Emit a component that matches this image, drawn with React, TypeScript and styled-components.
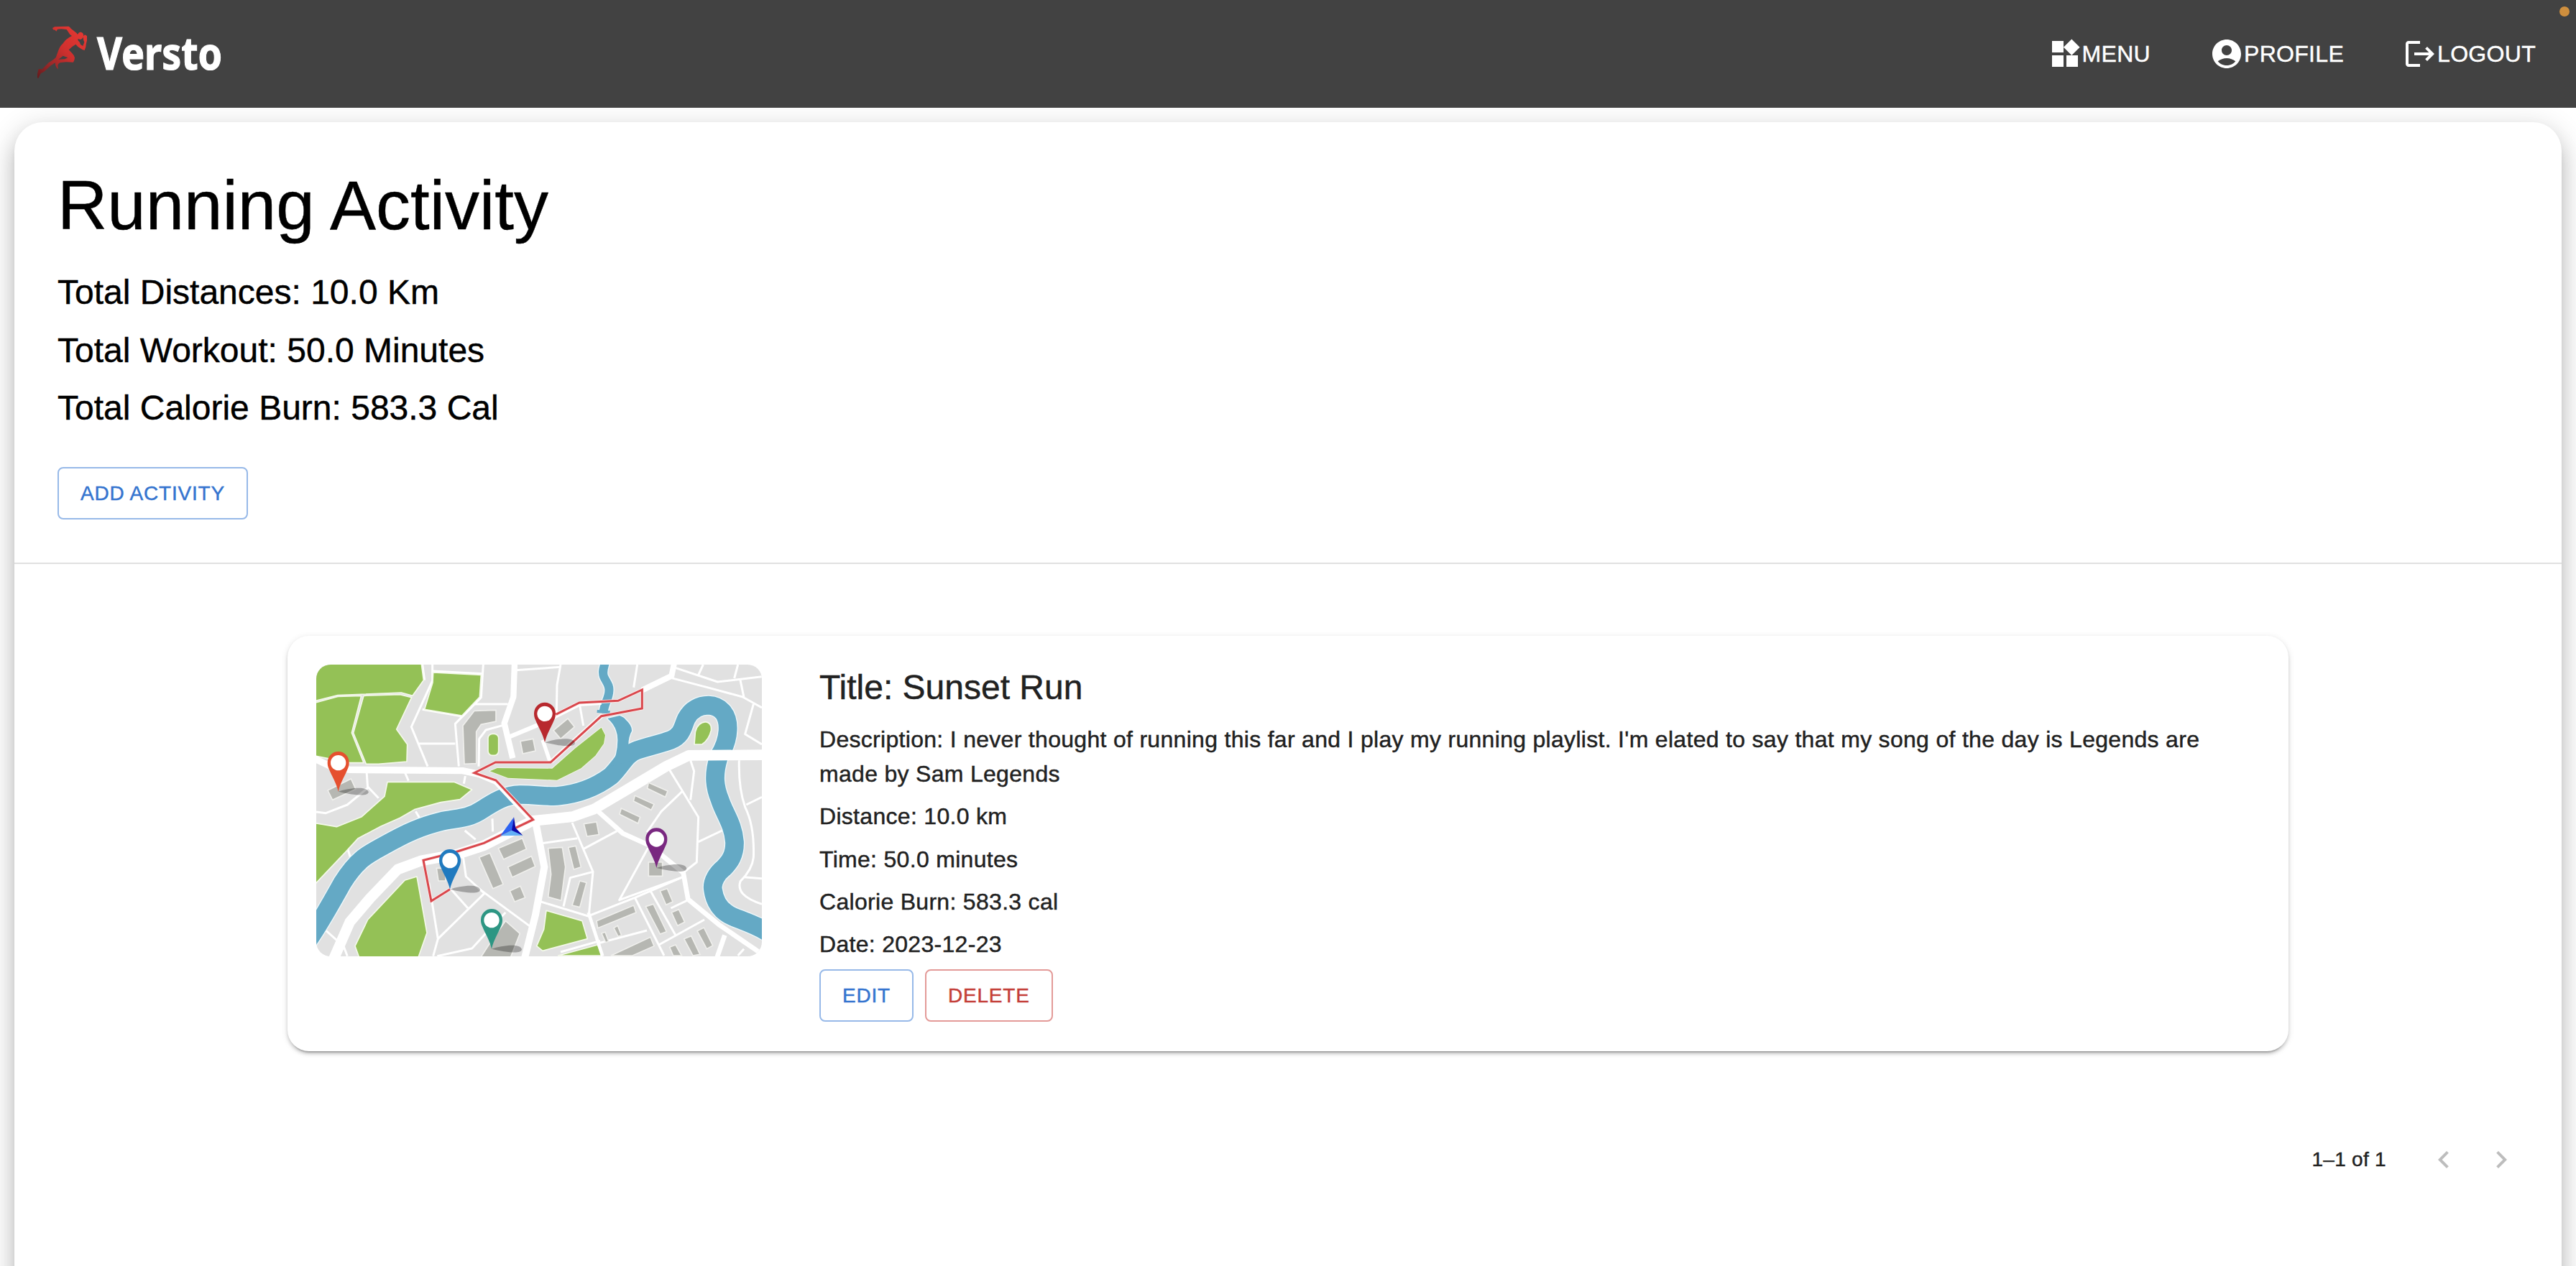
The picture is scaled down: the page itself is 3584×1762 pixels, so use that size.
import React from "react";
import styled, { createGlobalStyle } from "styled-components";

const GlobalStyle = createGlobalStyle`
  * { box-sizing: border-box; }
  body {
    margin: 0;
    background: #fff;
    font-family: "Liberation Sans", Arial, Helvetica, sans-serif;
    -webkit-text-stroke: 0.45px currentColor;
    overflow: hidden;
  }
  h1, h2, p { margin: 0; font-weight: 400; }
`;

const Page = styled.div`
  display: flex;
  flex-direction: column;
  height: 1762px;
  width: 100%;
  overflow: hidden;
  background: #fff;
`;

const Header = styled.header`
  position: relative;
  flex: none;
  height: 150px;
  padding: 0 56px 0 50px;
  background: #424242;
  color: #fff;
  display: flex;
  align-items: center;
  justify-content: space-between;
`;

const StatusDot = styled.span`
  position: absolute;
  top: 9px;
  right: 9px;
  width: 14px;
  height: 14px;
  border-radius: 50%;
  background: #cf8f3e;
`;

const Brand = styled.div`
  display: flex;
  align-items: center;
  height: 100%;
`;

const BrandMark = styled.svg`
  width: 74px;
  height: 77px;
  margin-bottom: 3px;
  display: block;
`;

const BrandName = styled.span`
  margin-left: 11px;
  margin-bottom: 5px;
  font-family: "Noto Sans", "Open Sans", sans-serif;
  font-weight: 700;
  font-size: 63px;
  line-height: 86px;
  -webkit-text-stroke: 1.2px currentColor;
  transform: scaleX(0.855);
  transform-origin: left center;
`;

const Nav = styled.nav`
  display: flex;
  align-items: center;
  gap: 82px;
`;

const NavLink = styled.a`
  display: flex;
  align-items: center;
  font-size: 32px;
  line-height: 48px;
  letter-spacing: 0.00938em;
  color: #fff;
`;

const Glyph = styled.svg`
  width: 48px;
  height: 48px;
  flex: none;
  display: block;
  fill: currentColor;
`;

const Main = styled.main`
  flex: 1;
  min-height: 0;
  padding: 20px 20px 0;
  overflow: hidden;
`;

const Paper = styled.section`
  min-height: 1700px;
  background: #fff;
  border-radius: 40px;
  box-shadow:
    0 12px 12px -6px rgba(0, 0, 0, 0.2),
    0 20px 28px 2px rgba(0, 0, 0, 0.14),
    0 8px 36px 6px rgba(0, 0, 0, 0.12);
`;

const Summary = styled.div`
  padding: 60px;
  border-bottom: 2px solid #e0e0e0;
  color: #000;
`;

const PageTitle = styled.h1`
  font-size: 96px;
  line-height: 112px;
  margin-bottom: 33px;
`;

const Stat = styled.h2`
  font-size: 48px;
  line-height: 64px;
  margin-bottom: 16.5px;
`;

const Button = styled.button<{ $tone: "primary" | "danger" }>`
  height: 73px;
  min-width: 128px;
  padding: 10px 30px;
  border-radius: 8px;
  border: 2px solid ${(p) => (p.$tone === "primary" ? "#97b9e8" : "#e39a98")};
  background: #fff;
  color: ${(p) => (p.$tone === "primary" ? "#3474cf" : "#c43e38")};
  font: 400 28px/49px "Liberation Sans", Arial, Helvetica, sans-serif;
  -webkit-text-stroke: 0.45px currentColor;
  letter-spacing: 0.02857em;
  text-transform: uppercase;
  white-space: nowrap;
`;

const AddRow = styled.div`
  display: flex;
  margin-top: 49.5px;
`;

const Card = styled.article`
  margin: 100px 380px 99px;
  height: 578px;
  padding: 40px;
  border-radius: 30px;
  background: #fff;
  display: flex;
  align-items: flex-start;
  gap: 80px;
  color: #212121;
  box-shadow:
    0 6px 2px -4px rgba(0, 0, 0, 0.2),
    0 4px 4px 0 rgba(0, 0, 0, 0.14),
    0 2px 10px 0 rgba(0, 0, 0, 0.12);
`;

const MapFrame = styled.svg`
  flex: none;
  display: block;
  width: 620px;
  height: 406px;
  border-radius: 20px;
`;

const Details = styled.div`
  flex: 1;
  min-width: 0;
`;

const CardTitle = styled.h2`
  font-size: 48px;
  line-height: 64px;
  margin-bottom: 16.8px;
`;

const Line = styled.p`
  font-size: 32px;
  line-height: 48px;
  letter-spacing: 0.00938em;
  margin-bottom: 11.2px;
`;

const Actions = styled.div`
  display: flex;
  gap: 16px;
`;

const Pagination = styled.footer`
  display: flex;
  align-items: center;
  justify-content: flex-end;
  height: 104px;
  padding-right: 44px;
`;

const Range = styled.span`
  font-size: 28px;
  line-height: 40px;
  letter-spacing: 0.01071em;
  color: #212121;
  margin-right: 40px;
`;

const PageButton = styled.span`
  display: flex;
  padding: 16px;
  color: #bdbdbd;
`;

const icons = {
  menu: "M13 13v8h8v-8h-8zM3 21h8v-8H3v8zM3 3v8h8V3H3zm13.66-1.31L11 7.34 16.66 13l5.66-5.66-5.66-5.65z",
  profile:
    "M12 2C6.48 2 2 6.48 2 12s4.48 10 10 10 10-4.48 10-10S17.52 2 12 2zm0 4c1.93 0 3.5 1.57 3.5 3.5S13.93 13 12 13s-3.5-1.57-3.5-3.5S10.07 6 12 6zm0 14c-2.03 0-4.43-.82-6.14-2.88C7.55 15.8 9.68 15 12 15s4.45.8 6.14 2.12C16.43 19.18 14.03 20 12 20z",
  logout:
    "m17 7-1.41 1.41L18.17 11H8v2h10.17l-2.58 2.58L17 17l5-5zM4 5h8V3H4c-1.1 0-2 .9-2 2v14c0 1.1.9 2 2 2h8v-2H4V5z",
  prev: "M15.41 16.59 10.83 12l4.58-4.59L14 6l-6 6 6 6 1.41-1.41z",
  next: "M8.59 16.59 13.17 12 8.59 7.41 10 6l6 6-6 6-1.41-1.41z",
};

const Icon = ({ name }: { name: keyof typeof icons }) => (
  <Glyph viewBox="0 0 24 24">
    <path d={icons[name]} />
  </Glyph>
);

const Runner = () => (
  <BrandMark viewBox="150 105 222 231">
    <defs>
      <linearGradient id="runner" x1="1" y1="0" x2="0" y2="1">
        <stop offset="0" stopColor="#ea3a34" />
        <stop offset="0.45" stopColor="#cf302e" />
        <stop offset="0.8" stopColor="#8f2627" />
        <stop offset="1" stopColor="#641a1c" />
      </linearGradient>
    </defs>
    <path
      fill="url(#runner)"
      fillRule="evenodd"
      d="M219 117 L228 112 L250 111 L286 110 Q291 112 296 119 L312 132 Q321 138 324 144 Q329 133 338 134 Q349 137 349 150 Q345 163 335 165 L326 162 L325 168 Q333 174 336 186 L346 192 L352 176 L348 166 L347 153 L354 145 L363 150 L363 169 Q359 182 358 196 L353 210 L345 208 L326 196 L316 185 Q301 193 287 208 L300 221 Q311 232 312 241 Q312 250 306 260 L276 259 L250 262 Q240 268 241 276 L243 288 L237 284 Q230 272 230 262 L212 274 L184 299 L170 307 L160 327 L156 325 L156 309 L161 288 L176 289 L203 262 Q227 247 233 240 L242 215 Q249 193 262 182 Q275 162 300 150 L292 144 L278 123 L256 121 L240 122 L235 131 L230 125 L222 124 Z M244 248 L263 233 L283 241 L270 247 Z"
    />
  </BrandMark>
);

const thinRoads = [
  "M60 690L100 695L190 660L275 590L270 520",
  "M190 840L210 905",
  "M275 585L320 632",
  "M430 525L445 560",
  "M682 540L676 572",
  "M475 688L495 722",
  "M795 718L797 772",
  "M680 768L725 805",
  "M100 1185L145 1225",
  "M170 1240L190 1292",
  "M503 75L512 140",
  "M545 75L545 142L457 335L525 500",
  "M485 405L640 405",
  "M757 75L748 212L640 322L655 500",
  "M545 102L755 113",
  "M503 262L668 290",
  "M722 240L860 240",
  "M893 98L1080 85",
  "M738 500L740 385L768 348L840 328",
  "M530 985L568 1220L548 1292",
  "M568 1220L762 1030L685 960L672 870",
  "M745 1015L958 1172",
  "M620 1010L693 1092",
  "M565 1292L710 1260L765 1200L850 1110",
  "M1080 75L1065 160L1063 275",
  "M1160 245L1175 330",
  "M1400 75L1385 170",
  "M1540 130L1700 172L1840 210L1920 255",
  "M1540 82L1735 147L1920 125",
  "M1675 75L1655 118",
  "M1820 75L1805 132",
  "M1830 140L1845 212",
  "M1885 240L1850 365L1920 408",
  "M1825 475Q1822 590 1850 670Q1890 750 1885 880Q1880 930 1830 980Q1810 1040 1920 1075",
  "M1855 660L1920 628",
  "M1845 962L1920 968",
  "M1535 515L1655 712L1648 900L1590 945",
  "M1590 962L1325 1058L1445 840",
  "M1440 775L1500 688L1590 602",
  "M1622 475L1637 520L1622 640",
  "M1655 815L1760 765",
  "M995 822L1150 800",
  "M1128 735L1215 940L1198 1120",
  "M1175 845L1315 770",
  "M1092 1085L1120 965L1215 940",
  "M998 1065L1195 1125L1390 1048L1590 962",
  "M1390 1048L1512 1290",
  "M1455 1020L1560 1205",
  "M1540 1092L1612 1058",
  "M1240 1238L1440 1185",
  "M1080 1275L1245 1228",
  "M1490 1245L1680 1140",
  "M1820 1290L1845 1262",
];

const peninsula =
  "M785 520L815 507L1045 509L1140 425L1250 338L1266 370L1260 405L1225 455L1165 508L1065 557L860 548Z";

const greens = [
  "M50 65L498 65L508 140L462 205L415 192L150 203L50 228Z",
  "M50 236L150 208L248 205L208 360L258 485L200 485L50 455Z",
  "M258 205L410 200L458 212L395 345L440 408L438 480L320 490L268 490L215 360Z",
  "M548 108L748 118L742 210L668 288L512 262L546 150Z",
  "M357 565L635 565L710 597L660 638L580 650L470 680L410 715L330 750L235 800L180 860L50 997L50 736L145 752L250 710L345 625Z",
  "M480 960L522 1195L485 1300L240 1300L222 1250L275 1140L430 975Z",
  peninsula,
  "M1642 358Q1650 318 1685 314Q1712 318 1708 350Q1700 388 1670 408L1638 408Z",
  "M1020 1102L1170 1145L1192 1220L1005 1270L980 1250L1010 1180Z",
  "M1070 1290L1235 1245L1252 1290Z",
];

const buildings = [
  "M720 268L810 265L810 312L748 325L728 355L728 488L678 490L672 330Z",
  "M912 395L965 385L975 435L922 447Z",
  "M108 600L205 552L225 595L128 640Z",
  "M562 925L600 925L600 978L570 978Z",
  "M740 880L785 862L840 992L797 1010Z",
  "M820 842L920 800L937 845L842 888Z",
  "M860 920L958 875L974 918L878 963Z",
  "M868 1020L912 1000L932 1048L888 1065Z",
  "M850 1145L910 1198L870 1300L745 1300L790 1230Z",
  "M1050 350L1110 300L1138 335L1080 385Z",
  "M1177 740L1230 732L1240 785L1190 792Z",
  "M1447 568L1527 603L1517 628L1442 592Z",
  "M1390 622L1470 658L1458 682L1384 645Z",
  "M1333 675L1412 712L1403 738L1326 700Z",
  "M1447 900L1505 900L1505 958L1447 958Z",
  "M1028 842L1087 838L1100 920L1082 1060L1028 1045L1040 950Z",
  "M1112 838L1143 832L1165 920L1135 930Z",
  "M1160 978L1188 985L1160 1088L1128 1080Z",
  "M1495 1020L1525 1010L1548 1065L1520 1078Z",
  "M1435 1085L1467 1075L1522 1190L1495 1200Z",
  "M1543 1110L1573 1097L1598 1150L1568 1165Z",
  "M1230 1145L1385 1080L1395 1110L1235 1175Z",
  "M1302 1175L1318 1165L1334 1205L1320 1210Z",
  "M1251 1197L1266 1192L1280 1230L1268 1235Z",
  "M1290 1290L1455 1213L1470 1250L1380 1290Z",
  "M1535 1255L1560 1245L1585 1290L1550 1290Z",
  "M1595 1220L1625 1208L1662 1285L1632 1290Z",
  "M1650 1187L1678 1173L1715 1248L1690 1262Z",
];

const river =
  "M20 1235C70 1165 120 1075 170 985C230 890 270 870 340 832C440 775 500 750 580 730C640 715 690 722 750 682C800 650 850 618 910 618C980 618 1010 626 1065 624C1130 618 1210 600 1290 540C1340 490 1350 450 1400 432C1450 415 1500 405 1540 390C1590 370 1590 330 1605 300C1625 262 1660 245 1697 245C1745 247 1778 280 1778 340C1778 380 1765 420 1740 460C1715 540 1725 590 1745 640C1765 700 1800 740 1806 815C1808 870 1785 900 1760 925C1735 945 1710 980 1716 1015C1722 1060 1745 1105 1800 1128C1850 1148 1890 1160 1940 1190";

const tributary =
  "M1267 60C1262 85 1252 100 1260 125C1270 148 1285 160 1282 185C1282 215 1262 235 1258 278";
const mouth =
  "M1276 300L1326 288Q1345 295 1352 305Q1378 328 1377 352Q1364 375 1363 408L1440 385L1400 470L1290 500Q1318 455 1318 390Q1318 335 1276 300Z";

const pins = [
  { x: 152, y: 605, color: "#e5502f" },
  { x: 1014, y: 400, color: "#b8292e" },
  { x: 618, y: 1013, color: "#207abf" },
  { x: 792, y: 1262, color: "#2d9683" },
  { x: 1480, y: 924, color: "#792880" },
];

const route =
  "M618 1013L540 1062L507 892L640 858L760 820L965 722L810 558L720 527L808 483L1038 483L1250 290L1420 258L1420 180L1320 226L1158 234L1060 283";

const CityMap = () => (
  <MapFrame viewBox="60 75 1860 1218" preserveAspectRatio="none">
    <rect x="60" y="75" width="1860" height="1218" fill="#e1e1e1" />
    <g fill="none" stroke="#fff" strokeWidth="9" strokeLinejoin="round">
      {thinRoads.map((d) => (
        <path key={d} d={d} />
      ))}
    </g>
    <g fill="#94c156" stroke="#f4f9ea" strokeWidth="5" strokeLinejoin="round">
      {greens.map((d) => (
        <path key={d} d={d} />
      ))}
      <rect x="777" y="364" width="44" height="90" rx="18" />
    </g>
    <g fill="none" strokeLinejoin="round">
      <g stroke="#eef8fb">
        <path d={river} strokeWidth="85" />
        <path d={tributary} strokeWidth="44" />
        <path d={mouth} strokeWidth="8" />
      </g>
      <g stroke="#64a9c5">
        <path d={river} strokeWidth="77" />
        <path d={tributary} strokeWidth="36" />
      </g>
      <path d={mouth} fill="#64a9c5" />
      <path d="M1232 270L1286 274" stroke="#64a9c5" strokeWidth="12" />
    </g>
    <g fill="none" stroke="#fff" strokeLinejoin="round">
      <path strokeWidth="28" d="M50 466L120 500L200 514L670 518L740 532" />
      <path
        strokeWidth="44"
        d="M130 1310L200 1150L285 1050L400 930L500 893L650 866L760 830L960 728L1130 710L1220 678L1360 595L1520 500L1615 454L1930 452"
      />
      <path strokeWidth="20" d="M730 532L808 565L955 722" />
      <path strokeWidth="25" d="M888 65L883 210L845 320L880 466" />
      <path strokeWidth="30" d="M975 730L1012 920L975 1120L930 1300" />
      <path strokeWidth="18" d="M868 376L990 325L1158 240L1250 234" />
      <path strokeWidth="24" d="M1420 182L1543 122L1555 65" />
      <path strokeWidth="16" d="M1005 390L1035 478" />
      <path strokeWidth="20" d="M1228 680L1340 780L1455 832L1592 944L1612 1055L1740 1160L1930 1290" />
      <path strokeWidth="14" d="M1196 1110L1255 1292" />
      <path strokeWidth="20" d="M1765 1205L1732 1300" />
      <path strokeWidth="18" d="M1040 480L1255 285" />
    </g>
    <path fill="#94c156" d={peninsula} />
    <g fill="#b6b7b2" stroke="#efefec" strokeWidth="5">
      {buildings.map((d) => (
        <path key={d} d={d} />
      ))}
    </g>
    <path d={route} fill="none" stroke="#fbeeee" strokeWidth="14" />
    <path d={route} fill="none" stroke="#d9474c" strokeWidth="9" />
    <path d="M885 712L828 790L878 766Z" fill="#2c62f2" />
    <path d="M828 790L878 766L922 788Z" fill="#63b0f6" />
    <path d="M885 712L876 767L922 788L892 757Z" fill="#0a08a8" />
    {pins.map(({ x, y, color }) => (
      <g key={color} transform={`translate(${x} ${y})`}>
        <path d="M0 0C40 -14 120 -26 126 2C124 24 60 14 0 0Z" fill="#000" opacity="0.28" />
        <path
          d="M0 0C-8 -36 -28 -66 -38 -92C-44 -104 -45 -112 -45 -121A45 46 0 0 1 45 -121C45 -112 44 -104 38 -92C28 -66 8 -36 0 0Z"
          fill={color}
        />
        <circle cy="-120" r="32" fill="#fff" />
      </g>
    ))}
  </MapFrame>
);

const stats = [
  "Total Distances: 10.0 Km",
  "Total Workout: 50.0 Minutes",
  "Total Calorie Burn: 583.3 Cal",
];

const details = [
  "Description: I never thought of running this far and I play my running playlist. I'm elated to say that my song of the day is Legends are made by Sam Legends",
  "Distance: 10.0 km",
  "Time: 50.0 minutes",
  "Calorie Burn: 583.3 cal",
  "Date: 2023-12-23",
];

export default function App() {
  return (
    <>
      <GlobalStyle />
      <Page>
        <Header>
          <Brand>
            <Runner />
            <BrandName>Versto</BrandName>
          </Brand>
          <Nav>
            <NavLink><Icon name="menu" />MENU</NavLink>
            <NavLink><Icon name="profile" />PROFILE</NavLink>
            <NavLink><Icon name="logout" />LOGOUT</NavLink>
          </Nav>
          <StatusDot />
        </Header>
        <Main>
          <Paper>
            <Summary>
              <PageTitle>Running Activity</PageTitle>
              {stats.map((s) => (
                <Stat key={s}>{s}</Stat>
              ))}
              <AddRow>
                <Button $tone="primary">Add Activity</Button>
              </AddRow>
            </Summary>
            <Card>
              <CityMap />
              <Details>
                <CardTitle>Title: Sunset Run</CardTitle>
                {details.map((d) => (
                  <Line key={d}>{d}</Line>
                ))}
                <Actions>
                  <Button $tone="primary">Edit</Button>
                  <Button $tone="danger">Delete</Button>
                </Actions>
              </Details>
            </Card>
            <Pagination>
              <Range>1–1 of 1</Range>
              <PageButton><Icon name="prev" /></PageButton>
              <PageButton><Icon name="next" /></PageButton>
            </Pagination>
          </Paper>
        </Main>
      </Page>
    </>
  );
}
